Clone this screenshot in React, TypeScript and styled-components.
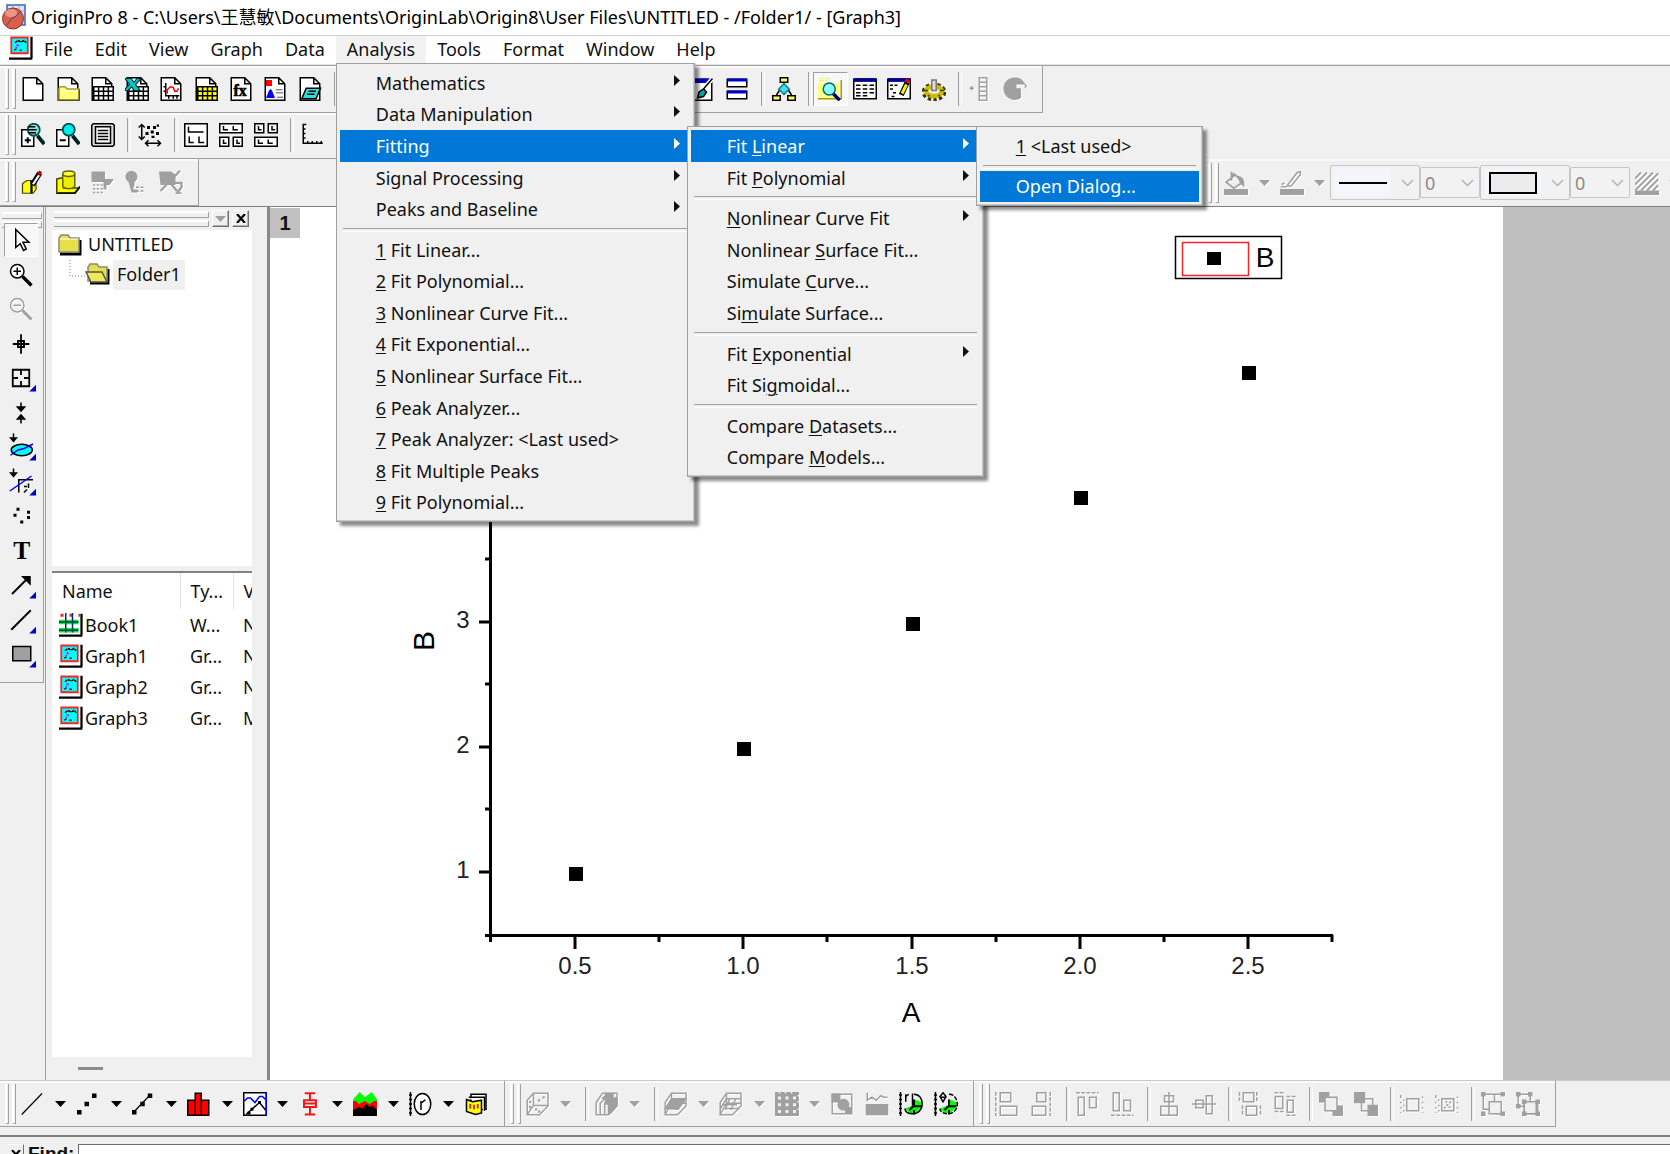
import React from "react";
import styled, { createGlobalStyle, css } from "styled-components";

const FACE = "#f0f0f0";
const EDGE = "#a0a0a0";
const HILITE = "#0078d7";
const UI = `"Noto Sans", "Noto Sans CJK SC", sans-serif`;
const CELL = 34.5;

const GlobalStyle = createGlobalStyle`
  * { box-sizing: border-box; }
  body { margin: 0; background: ${FACE}; font-family: ${UI}; font-size: 18px; color: #111; }
  button, input, select { font: inherit; color: inherit; }
  button { border: 0; padding: 0; margin: 0; background: none; }
  ul { list-style: none; margin: 0; padding: 0; }
`;

/* ---------- frame ---------- */

const Shell = styled.div`
  height: 100vh;
  overflow: hidden;
`;

const Frame = styled.div`
  display: flex;
  flex-direction: column;
  height: calc(100% + 14px);
  background: ${FACE};
`;

const TitleBar = styled.header`
  flex: none;
  display: flex;
  align-items: center;
  gap: 5px;
  height: 36px;
  padding: 0 2px 2px;
  border-bottom: 1px solid #d0d0d0;
  background: #fff;
`;

const Title = styled.h1`
  margin: 0;
  font-size: 18px;
  font-weight: 400;
  line-height: 32px;
  white-space: pre;
  color: #000;
`;

const MenuBar = styled.nav`
  position: relative;
  z-index: 5;
  flex: none;
  display: flex;
  height: 29px;
  padding-left: 9px;
  background: #fff;
  border-bottom: 1px solid #e4e4e4;
`;

const TopItem = styled.div`
  position: relative;
`;

const TopButton = styled.button<{ $open?: boolean }>`
  height: 27px;
  padding: 0 11px;
  line-height: 27px;
  background: ${(p) => (p.$open ? "#f2f2f2" : "transparent")};
`;

/* ---------- popup menus ---------- */

const Popup = styled.ul<{ $w: number; $h: number; $sub?: boolean }>`
  position: absolute;
  z-index: 1;
  top: ${(p) => (p.$sub ? "-4px" : "27px")};
  left: ${(p) => (p.$sub ? "calc(100% - 4px)" : "0")};
  display: flex;
  flex-direction: column;
  width: ${(p) => p.$w}px;
  height: ${(p) => p.$h}px;
  padding: 3px;
  border: 1px solid ${EDGE};
  background: ${FACE};
  box-shadow: inset -1px -1px 0 #c8c8c8, 4px 4px 3px rgba(0, 0, 0, 0.45);
`;

const Entry = styled.li`
  position: relative;
  flex: 1;
  min-height: 0;
`;

const EntryButton = styled.button<{ $on?: boolean }>`
  display: flex;
  align-items: center;
  justify-content: space-between;
  width: 100%;
  height: 100%;
  padding: 0 11px 0 36px;
  line-height: 24px;
  text-align: left;
  white-space: pre;
  background: ${(p) => (p.$on ? HILITE : "transparent")};
  color: ${(p) => (p.$on ? "#fff" : "#111")};

  svg { flex: none; margin-bottom: 5px; }
  u { text-underline-offset: 2px; text-decoration-thickness: 1px; }
`;

const Rule = styled.li`
  flex: none;
  height: 9px;
  margin: 0 3px;
  padding-top: 3px;

  &::before {
    content: "";
    display: block;
    height: 2px;
    border-top: 1px solid ${EDGE};
    border-bottom: 1px solid #fff;
  }
`;

/* ---------- toolbars ---------- */

const Dock = styled.div`
  flex: none;
  display: grid;
  grid-auto-rows: 1fr;
  height: 141px;
  border-top: 1px solid ${EDGE};
`;

const Band = styled.div`
  display: flex;
  overflow: hidden;
  min-width: 0;
`;

const BottomDock = styled(Band)`
  flex: none;
  height: 47px;
  border-top: 1px solid #c8c8c8;
`;

const Bar = styled.div<{ $wide?: boolean; $end?: boolean }>`
  flex: none;
  display: flex;
  align-items: center;
  padding-right: 10px;
  border-right: 1px solid ${EDGE};
  border-bottom: 1px solid ${EDGE};
  box-shadow: inset 0 2px 0 #fafafa;
  ${(p) => p.$wide && css`width: 600px;`}
  ${(p) =>
    p.$end &&
    css`
      width: 467px;
      margin-left: auto;
      padding-right: 0;
      overflow: hidden;
      border-right: 0;
      border-bottom: 0;
    `}
`;

const Grip = styled.div`
  flex: none;
  display: flex;
  gap: 3px;
  width: 16px;
  height: 40px;
  padding-left: 5px;

  &::before,
  &::after {
    content: "";
    width: 4px;
    border-left: 2px solid #fff;
    border-right: 1px solid ${EDGE};
    border-bottom: 1px solid ${EDGE};
  }
`;

const Cells = styled.div<{ $w: number }>`
  flex: none;
  display: grid;
  grid-auto-flow: column;
  grid-auto-columns: 1fr;
  width: ${(p) => p.$w}px;
`;

const Split = styled.div`
  flex: none;
  display: flex;
`;

const Tool = styled.button<{ $pressed?: boolean }>`
  flex: 1;
  display: flex;
  align-items: center;
  justify-content: center;
  height: 34px;
  min-width: 0;
  ${(p) =>
    p.$pressed &&
    css`
      border: 1px solid;
      border-color: ${EDGE} #fff #fff ${EDGE};
      background: #f8f8f8;
    `}
  &:disabled svg { filter: drop-shadow(1px 1px 0 #fff); }
`;

const Drop = styled.button`
  flex: none;
  display: flex;
  align-items: center;
  justify-content: center;
  width: 21px;
  height: 34px;
  &:disabled svg { filter: drop-shadow(1px 1px 0 #fff); }
`;

const Divider = styled.div<{ $roomy?: boolean }>`
  flex: none;
  width: ${(p) => (p.$roomy ? 14 : 12)}px;
  height: 34px;
  padding-left: ${(p) => (p.$roomy ? 9 : 7)}px;

  &::before {
    content: "";
    display: block;
    width: 2px;
    height: 100%;
    border-left: 1px solid ${EDGE};
    border-right: 1px solid #fff;
  }
`;

const Filler = styled.div`
  flex: none;
  width: 346px;
`;

const Combo = styled.div<{ $small?: boolean }>`
  position: relative;
  flex: none;
  display: flex;
  align-items: center;
  justify-content: space-between;
  width: ${(p) => (p.$small ? 60 : 90)}px;
  height: ${(p) => (p.$small ? 31 : 35)}px;
  padding: 0 5px 0 4px;
  border: 1px solid #c6c6c6;
  border-radius: 2px;
  background: #f2f2f2;
`;

const Sample = styled.button`
  display: flex;
  align-items: center;
  justify-content: center;
  width: 56px;
  height: 27px;
  background: #f3f7fd;
`;

const Amount = styled.select`
  width: 24px;
  height: 27px;
  padding: 0;
  border: 0;
  appearance: none;
  background: transparent;
  color: #8a8a8a !important;
  opacity: 1;
`;

/* ---------- body ---------- */

const Body = styled.main`
  flex: 1;
  display: flex;
  min-height: 0;
  border-top: 1px solid #808080;
`;

const Palette = styled.aside`
  flex: none;
  width: 46px;
  border-right: 1px solid ${EDGE};
`;

const PaletteBox = styled.div`
  width: 44px;
  height: 476px;
  border-right: 1px solid ${EDGE};
  border-bottom: 1px solid ${EDGE};
`;

const Bars = styled.div<{ $w: number }>`
  display: grid;
  gap: 2px;
  width: ${(p) => p.$w}px;

  &::before,
  &::after {
    content: "";
    height: 4px;
    border-top: 2px solid #fff;
    border-right: 1px solid ${EDGE};
    border-bottom: 1px solid ${EDGE};
  }
`;

const PaletteHead = styled.div`
  height: 16px;
  padding: 5px 2px 0;
`;

const PaletteCells = styled.div`
  display: grid;
  grid-auto-rows: 1fr;
  width: 34px;
  height: 449px;
  margin-left: 4px;
`;

const Explorer = styled.section`
  flex: none;
  display: flex;
  flex-direction: column;
  width: 224px;
  padding: 0 15px 0 6px;
  border-right: 3px solid #888;
`;

const ExplorerHead = styled.div`
  flex: none;
  display: flex;
  align-items: center;
  gap: 3px;
  height: 23px;
  padding-left: 2px;
`;

const MiniButton = styled.button`
  flex: none;
  display: flex;
  align-items: center;
  justify-content: center;
  width: 17px;
  height: 17px;
  border: 1px solid;
  border-color: #fff #707070 #707070 #fff;
  box-shadow: inset -1px -1px 0 #b0b0b0;
`;

const Tree = styled.ul`
  flex: none;
  height: 336px;
  background: #fff;
`;

const TreeRow = styled.li<{ $deep?: boolean }>`
  display: flex;
  align-items: center;
  height: 30px;
  padding-left: ${(p) => (p.$deep ? 17 : 6)}px;
  gap: ${(p) => (p.$deep ? 3 : 2)}px;
`;

const TreeLabel = styled.button<{ $selected?: boolean }>`
  height: 30px;
  padding: 0 4px 2px;
  line-height: 28px;
  background: ${(p) => (p.$selected ? "#f0f0f0" : "transparent")};
`;

const ListBox = styled.div`
  flex: 1;
  min-height: 0;
  margin-top: 5px;
  overflow: hidden;
  border-top: 2px solid #808080;
  background: #fff;
`;

const Listing = styled.table`
  table-layout: fixed;
  width: 231px;
  border-collapse: collapse;

  th, td { padding: 0 0 0 10px; text-align: left; font-weight: 400; white-space: nowrap; overflow: hidden; }
  th { height: 36px; border-right: 1px solid #e2e2e2; }
  td { height: 31px; line-height: 24px; }
  td:first-child { padding-left: 7px; }
`;

const FileName = styled.span`
  display: flex;
  align-items: center;
  gap: 2px;
`;

const ListFoot = styled.div`
  flex: none;
  display: flex;
  align-items: center;
  height: 23px;
  padding-left: 26px;
`;

const Thumb = styled.div`
  width: 25px;
  height: 3px;
  background: #8c8c8c;
`;

const Workspace = styled.section`
  flex: 1;
  display: flex;
  min-width: 0;
  overflow: hidden;
  background: #bfbfbf;
`;

const GraphPage = styled.div`
  position: relative;
  flex: 0 1 1233px;
  overflow: hidden;
  background: #fff;
`;

const LayerTab = styled.button`
  position: absolute;
  top: 1px;
  left: 0;
  width: 30px;
  height: 30px;
  background: #c0c0c0;
  font-family: "Liberation Sans", Arial, sans-serif;
  font-size: 20px;
  font-weight: 700;
`;

const Chart = styled.svg`
  display: block;
  font-family: "Liberation Sans", Arial, sans-serif;
`;

/* ---------- find bar ---------- */

const FindBar = styled.form`
  flex: none;
  display: flex;
  align-items: flex-start;
  height: 33px;
  margin-top: 8px;
  padding: 7px 0 0 8px;
  border-top: 2px solid #808080;
`;

const CloseFind = styled.button`
  display: flex;
  align-items: center;
  justify-content: center;
  width: 16px;
  height: 20px;
  border-right: 1px solid #707070;
  border-top: 1px solid #fff;
`;

const FindLabel = styled.label`
  padding: 0 4px;
  font-family: "Liberation Sans", Arial, sans-serif;
  font-size: 19px;
  font-weight: 700;
  line-height: 19px;
`;

const FindInput = styled.input`
  flex: 1;
  min-width: 0;
  height: 24px;
  border: 1px solid #707070;
  border-right: 0;
  border-radius: 0;
  background: #fff;
`;

/* ---------- icons, drawn on a 16 unit grid ---------- */

const Glyph = ({ children, size = 24 }: { children: React.ReactNode; size?: number }) => (
  <svg width={size} height={size} viewBox="0 0 16 16" fill="none" stroke="#000" aria-hidden="true">
    {children}
  </svg>
);

const Sheet = () => <path d="M1.5.5h9l4 4v11h-13zM10.5.5v4h4" fill="#fff" />;

const Grid = ({ fill }: { fill: string }) => (
  <g>
    <path d="M2.5 6.5h13v9h-13z" fill={fill} />
    <path d="M2.5 9.5h13M2.5 12.5h13M5.75 6.5v9M9 6.5v9M12.25 6.5v9" />
  </g>
);

const G = "#a0a0a0";

const DocOpen = () => (
  <><Sheet /><path d="M2 15.5V7.5l1-1h3l1.500 1.500h8v7.500z" fill="#ffff7a" stroke="#a89c30" /><path d="M3 9.500h12" stroke="#fff" strokeDasharray="1 1" /><path d="M15.500 8.500v7H2" stroke="#5a5420" /></>
);
const DocGrid = () => <><Sheet /><Grid fill="#fff" /></>;
const DocExcel = () => (
  <><Sheet /><Grid fill="#fff" /><path d="M0 1h4l2 2.500L8 1h2v1L7 5l3 4H6L4.500 6.500 2 9H0V8l3-3z" fill="#0cc" stroke="#033" strokeWidth=".8" /></>
);
const DocGraph = () => (
  <><Sheet /><path d="M4.500 4v8.500h9M3 6.500h1.500M3 9.500h1.500M6.500 13v1.500M9.500 13v1.500M12 13v1.500" /><path d="M5.500 11V8.500L7.500 6.500l2 .5 1 2.500h1.500l1-2" stroke="#f00" /></>
);
const DocMatrix = () => <><Sheet /><Grid fill="#ff0" /></>;
const DocFx = () => (
  <><Sheet /><text x="3" y="12.500" fontSize="10.500" fontWeight="700" fontFamily="Liberation Serif, serif" fill="#000" stroke="#000" strokeWidth=".4">fx</text></>
);
const DocLayout = () => (
  <><Sheet /><g stroke="none"><path d="M2 2h4v4H2z" fill="#f00" /><path d="M2 14l2-5 1-1 1 1 2 5z" fill="#00f" /></g><path d="M8.500 8.500h4.500M8.500 10.500h5M9.500 13.500h4" stroke="#889" /></>
);
const DocNotes = () => (
  <><Sheet /><path d="M5.500 7.500h9.500l-3 7H2.500z" fill="#3dd" /><path d="M7 9.500h5M6 11.500h5" /></>
);

const Brush = () => (
  <><path d="M1.500 1.500h13v14h-13z" fill="#fff" /><path d="M2 1h12v3H2z" fill="#00c" stroke="none" /><path d="M15.500.5 8 9" stroke="#fff" strokeWidth="3" /><path d="M15 1 9 8" /><path d="M5 14l1-4 3-2 2 2-2 3z" fill="#0aa" /></>
);
const TwoPanes = () => (
  <><path d="M1.500 1.500h13v5h-13zM1.500 9.500h13v5h-13z" fill="#fff" /><path d="M1.500 2h13M1.500 10h13" stroke="#00c" strokeWidth="2" /></>
);
const Flow = () => (
  <><path d="M8 4v8M8 8h-2.500L3 12M8 8h2.500l2.500 4" /><path d="M5.500.5h5v3h-5zM.5 12.500h5v3h-5zM10.500 12.500h5v3h-5z" fill="#ff6" /><path d="M8 4.500 11.500 8 8 11.500 4.500 8z" fill="#4de" stroke="#088" /></>
);
const Finder = () => (
  <><path d="M0 4h14v10H0z" fill="#ff8" stroke="none" /><path d="M0 14.500h15M15.500 2v13" stroke="#a90" /><path d="M1 1h8M1 2.500h6" stroke="#ee4" strokeDasharray="1 1" /><path d="M10 11l4.500 4.500" stroke="#006" strokeWidth="2.200" /><circle cx="7.500" cy="8" r="4" fill="#8ff" stroke="#067" /></>
);
const TableView = () => (
  <><path d="M.5 1.500h15v13H.5z" fill="#fff" /><path d="M.5 2h15" stroke="#008" strokeWidth="2.500" /><path d="M2 5.500h3M6.500 5.500h3M11 5.500h3M2 8h3M6.500 8h3M11 8h3M2 10.500h3M6.500 10.500h3M11 10.500h3M2 12.500h3M6.500 12.500h3" /></>
);
const EditView = () => (
  <><path d="M.5 1.500h15v13H.5z" fill="#fff" /><path d="M.5 2h15" stroke="#008" strokeWidth="2.500" /><path d="M2 5.500h5M2 8h3M4 10.500h3M3 13h2" strokeDasharray="2 1" /><path d="M13.500 3.500 9.500 12" strokeWidth="3.500" /><path d="M13 5 10 11" stroke="#fe0" strokeWidth="2" /><path d="M14 1.500l-.8 2" stroke="#e00" strokeWidth="3" /></>
);
const Gear = () => (
  <><ellipse cx="8" cy="10" rx="6.500" ry="4.500" stroke="#3a3500" strokeWidth="3.500" strokeDasharray="2 1.500" /><ellipse cx="8" cy="9.500" rx="5.200" ry="3.200" stroke="#cb0" strokeWidth="3" /><path d="M1 9h3M12 9h3M4 13l1-1M11 12l1 1" stroke="#4a4400" /><path d="M6.500 2h3v7h-3z" fill="#ddd" stroke="#777" /></>
);
const AddColumn = () => <path d="M1 7.500h3M2.500 6v3M7.500.5h5v15h-5zM7.500 3.500h5M7.500 6.500h5M7.500 9.500h5M7.500 12.500h5" stroke={G} />;
const Pie = () => <path d="M14 3.500A7.500 7.500 0 1 0 12 14V7.500H9V5h5.500v3L16 6z" fill={G} stroke="none" />;

const ZoomPage = ({ minus }: { minus?: boolean }) => (
  <>
    <path d="M.500 4.500h8v11h-8z" fill="#fff" />
    <path d={minus ? "M2.500 11.500h4" : "M2.500 11.500h4M4.500 9.500v4"} strokeWidth="1.300" />
    <path d="M11 8.500l4.500 5.500" stroke="#022" strokeWidth="2.500" />
    <circle cx="8.500" cy="4.500" r="4" fill={minus ? "#0ee" : "#9dd"} stroke="#055" strokeWidth="1.200" />
    {!minus && <path d="M4.500 2.500h5M4.500 4.500h6M5 6.500h5" />}
  </>
);
const PageList = () => (
  <><path d="M1.500.5h13l1 1v13l-1 1h-13l-1-1v-13z" fill="#ddd" /><path d="M3 2.500h10v11H3z" fill="#fff" /><path d="M4.500 5h7M4.500 7h7M4.500 9h7M4.500 11h7" /></>
);
const Rescale = () => (
  <><path d="M2.500 1v10M.5 3l2-2 2 2M.5 9l2 2 2-2M5 13.500h10M7 11.500l-2 2 2 2M13 11.500l2 2-2 2" /><path d="M6 2h2v2H6zM10 2h2v2h-2zM12.500 1h1.500v1.500h-1.500zM5 6h2v2H5zM8.500 5h2v2h-2zM12 6h2v2h-2zM9 8.500h2v1.500H9z" fill="#000" stroke="none" /></>
);
const LayA = () => <><path d="M.5.500h15v15H.500z" fill="#fff" /><path d="M3 2.500v3.500h10M3.500 9v4h3M10 9v4h3.500" /></>;
const LayB = () => <><path d="M.5.5h15v6H.500zM.5 9.500h6v6h-6zM9.500 9.500h6v6h-6z" fill="#fff" /><path d="M3 2v2.500h3M9.500 2v2.500h3M3 11v2.500h2M12 11v2.500h2" /></>;
const LayC = () => <><path d="M.5 9.500h15v6H.500zM.5.500h6v6h-6zM9.500.500h6v6h-6z" fill="#fff" /><path d="M3 11v2.500h3M9.500 11v2.500h3M3 2v2.500h2M12 2v2.500h2" /></>;
const Axis = () => <path d="M1.500.500v13h13M1.500 1h2M1.500 4h1.500M1.500 7h1.500M1.500 10h1.500M4.500 13v-1M7.500 13v-1M10.500 13v-1M13.500 13v-1" />;

const BoxPen = () => (
  <><path d="M1 9l3-2h6v6l-2 2.500H1z" fill="#ff0" stroke="#440" strokeWidth=".8" /><path d="M7 7v8.500" stroke="#000" strokeWidth="1.500" /><path d="M12.500 2 7.500 10" strokeWidth="3.500" /><path d="M12 3.500 8 9.500" stroke="#fff" strokeWidth="1.500" /><path d="M11.500 1.500l2 1" stroke="#c00" strokeWidth="2.500" /></>
);
const BoxOpen = () => (
  <><path d="M.500 6l4.500-1v7h10.500l-3 3.500H.500z" fill="#ff0" stroke="#440" /><path d="M4.500 3v8c2 2 6 2 8 0V3z" fill="#ee0" stroke="#660" /><ellipse cx="8.500" cy="2.500" rx="4" ry="1.800" fill="#ff3" stroke="#660" /><path d="M1 15.500h11.500l3.500-4.500" stroke="#110" strokeWidth="1.300" /></>
);
const GreyTable = () => <><path d="M1 1h9v5h6l-3 4h-2v3H9V8H1z" fill={G} stroke="none" /><path d="M2 10h7M2 12.500h7M2 15h7" stroke={G} strokeDasharray="1.500 1" /></>;
const GreyBalloon = () => <><circle cx="5" cy="4.500" r="4" fill={G} stroke="none" /><path d="M3 8h4v2l-1 3h3v2H5z" fill={G} stroke="none" /><path d="M8 11.500h6M8 14h5" stroke={G} strokeDasharray="2 1" /></>;
const GreyCross = () => <><path d="M0 1h8l3 2v7H1z" fill={G} stroke="none" /><path d="M14 .500 1 14M7 8l5 6M10 8.500h5v3l-3 4h3" stroke={G} strokeWidth="1.500" /></>;

const Bucket = () => <><path d="M5 .500v6M1.500 7.500l6-5 5 5-6 4zM5 3l2-1.500" stroke={G} strokeWidth="1.200" /><path d="M9 3c4 1 5 3 4.500 8l-3-3z" fill={G} stroke="none" /><path d="M0 12h16v4H0z" fill={G} stroke="none" /></>;
const Pen = () => <><path d="M5 9.500 11.500 1l2-.5v2L7.500 10H5zM.500 10.500h4M1 9l2-1" stroke={G} /><path d="M0 12h16v4H0z" fill={G} stroke="none" /></>;
const Hatch = () => <><path d="M0 5l4-4M0 9l8-8M0 13 12 1M4 13 15.500 1.500M8 13l7.500-7.500M12 13l3.500-3.500" stroke={G} strokeWidth="1.200" /><path d="M0 13h16v3H0z" fill={G} stroke="none" /></>;

const Corner = () => <path d="M18 12.500V17h-4.500z" fill="#00c" stroke="none" />;

const PaletteSvg = styled.svg`
  overflow: visible;
`;
const PGlyph = ({ children }: { children: React.ReactNode }) => (
  <PaletteSvg width="24" height="24" viewBox="0 0 16 16" fill="none" stroke="#000" aria-hidden="true">
    {children}
  </PaletteSvg>
);

const palette: [string, React.ReactNode, boolean?][] = [
  ["Pointer", <path d="M4.500 1v12l3-2.500 2.200 4.500 1.800-1-2.200-4.500h4z" fill="#fff" />],
  ["Zoom in", <><circle cx="5.500" cy="5.500" r="4.500" fill="#fff" /><path d="M3 5.500h5M5.500 3v5" /><path d="M9 9l6 6" strokeWidth="2.200" /></>],
  ["Zoom out", <><circle cx="5.500" cy="5.500" r="4.500" stroke={G} /><path d="M3 5.500h5" stroke={G} /><path d="M9 9l6 6" stroke={G} strokeWidth="2" /></>, true],
  ["Screen reader", <><path d="M8 1.500v13M2.500 8h11" strokeWidth="1.200" /><path d="M6 6h4v4H6z" strokeWidth="1.200" /></>],
  ["Data reader", <><path d="M2.500 2.500h11v11h-11zM8 2.500v3.500M8 10v3.500M2.500 8H6M10 8h3.500" strokeWidth="1.200" /><Corner /></>],
  ["Data selector", <><path d="M8 1v4M8 11v4" /><path d="M4.500 3.500h7L8 7.500zM4.500 12.500h7L8 8.500z" fill="#000" stroke="none" /></>],
  ["Selection on active plot", <><path d="M3-1v3" /><path d="M0 1.500h6L3 5z" fill="#000" stroke="none" /><ellipse cx="8.500" cy="10" rx="7" ry="3.800" fill="#0ff" /><path d="M1 13.500 6 10l4-1 6-3" stroke="#00f" /><Corner /></>],
  ["Mask points", <><path d="M3-1v3" /><path d="M0 1.500h6L3 5z" fill="#000" stroke="none" /><path d="M6.500 15V6.500H16" /><path d="M10 11h2M10 15l2-2M13 9v3" strokeDasharray="3 1" /><path d="M.500 14 15 4" stroke="#00f" /><Corner /></>],
  ["Draw data", <path d="M5 2.500h2v2H5zM3 6.500h2v2H3zM7.500 11h2v2h-2zM12 4.500h2v2h-2zM12 8h2v2h-2z" fill="#000" stroke="none" />],
  ["Text", <text x="8.500" y="13.500" textAnchor="middle" fontSize="17" fontWeight="700" fontFamily="Liberation Serif, serif" fill="#000" stroke="none">T</text>],
  ["Arrow", <><path d="M2 14 12 4" strokeWidth="1.300" /><path d="M8 2h6.500v6.500z" fill="#000" stroke="none" /><Corner /></>],
  ["Line", <><path d="M1.500 14.500 14.500 1.500" strokeWidth="1.300" /><Corner /></>],
  ["Rectangle", <><path d="M2.500 3h12v9.500h-12z" fill="#a0a0a0" /><Corner /></>],
];

const PLine = () => <path d="M.500 15 14 1" strokeWidth=".8" />;
const PScatter = () => <path d="M0 12h3v3H0zM5 6.500h3v3H5zM10 1h3v3h-3z" fill="#000" stroke="none" />;
const PLineSym = () => <><path d="M1.500 13 12 2" strokeWidth=".8" /><path d="M0 12h3v3H0zM5.500 6.500h3v3h-3zM10.500 1h3v3h-3z" fill="#000" stroke="none" /></>;
const PColumn = () => <path d="M.500 5.500h5v10h-5zM5.500.800h4v14.700h-4zM9.500 5.500h5v10h-5z" fill="#f00" />;
const PMulti = () => (
  <><path d="M.500.500h15v15H.500z" fill="#fff" /><path d="M15.500 0v16" stroke="#00f" /><path d="M1 6l2-2 2 0 3 3 3-4h2l2 2" stroke="#00f" /><path d="M2 15l9-8 4 5" /><path d="M10 6h2v2h-2zM5 10.500h2v2H5zM3 13h2v2H3z" fill="#000" stroke="none" /></>
);
const PBox = () => <path d="M4.500.800h7M8 1v4M4 5.500h8v4.500H4zM4 7.700h8M8 10v5M4.500 15h7" stroke="#f01818" strokeWidth="1.300" />;
const PArea = () => (
  <g stroke="none"><path d="M0 5l4.500-5 3.500 3.500L12.500 0 16 5v5H0z" fill="#0f0" /><path d="M0 6h2l2 2 4-2 3 2 3-2h2v10H0z" fill="#f00" /><path d="M0 12l4-2 2 1 3-3 2 2 2-1 3 3v4H0z" fill="#000" /></g>
);
const PPolar = () => (
  <><path d="M1 0v16M0 2h2M0 5h2M0 8h2M0 11h2M0 14h2" /><ellipse cx="9" cy="8" rx="5.500" ry="7" fill="#fff" /><path d="M8 12V6M8 7.500 10.500 5.500h.5" /></>
);
const PTemplate = () => (
  <><path d="M4 1.500h10v10H4z" fill="#fff" /><path d="M2.500 3.500h10.500v9" fill="#fff" /><path d="M1 5l4 1.500 6-1V14l-4 1-6-2z" fill="#ff0" /><path d="M3.500 8v3M6 8.500v3M8.500 8v3" stroke="#c20" strokeWidth="1.200" /></>
);

const Cube = ({ children }: { children?: React.ReactNode }) => (
  <g stroke={G}><path d="M.800 7 5 .800h9.700v8.500L9 15.200H.800zM5 .800v6.500M.800 15 5 7.500h9.500" />{children}</g>
);
const CDots = () => (
  <g stroke={G}><path d="M.800 5.500 5 .800h9.700v8.500L9 15.200H.800zM5 .800v8M.800 15 5 9h9.500" /><path d="M2 6.500h1.500M2 10h1.500M8 5.500h1.500M11 3.500h1.500M6 11.500h1.500M8 13h1.500" strokeWidth="1.500" /></g>
);
const CBars = () => (
  <><path d="M.800 7 5 .800h9.700v8.500L9 15.200H.800zM3.500 15V7.500L6 5M6.500 15V7" stroke={G} /><path d="M5 4l2-1.500V1h5v3h2.500v5l-4 5H9V8H7V5z" fill={G} stroke={G} /></>
);
const CSurface = () => <Cube><path d="M1 11 5 4.500h9.500l-5 7z" fill={G} /></Cube>;
const CWire = () => <Cube><path d="M1 11 5 4.500h9.500M2 8.500h10M7 5l-3 7M11 5l-3 7M4 11h9" /></Cube>;
const CMesh = () => (
  <><path d="M0 0h16v16H0z" fill={G} stroke="none" /><path d="M2 4h2M7 4h2M12 4h2M2 8.500h2M7 8.500h2M12 8.500h2M2 13h2M7 13h2M12 13h2" stroke="#f0f0f0" strokeWidth="2" /><path d="M3 0v1M7 0v1M11 0v1M15.500 2v1M15.500 6v1M15.500 11v1" stroke="#f0f0f0" /></>
);
const CImage = () => <><path d="M1.500 1.500h13v13h-13z" stroke={G} /><path d="M1 1h6v6H1z" fill={G} stroke="none" /><circle cx="9" cy="8.500" r="4" fill={G} stroke="none" /><path d="M10 10h4v4h-4z" fill={G} stroke="none" /></>;
const CProfile = () => <><path d="M1 8.500h14V15H1z" fill={G} stroke={G} /><path d="M1.500.500v5l3-2 3 2 3-3 2 1h2.500" stroke={G} /></>;
const CPolar = ({ theta }: { theta?: boolean }) => (
  <>
    <path d="M1 0v16M0 2h2M0 5h2M0 8h2M0 11h2M0 14h2" />
    <path d="M4 11l5-2 2-4 4 2-1 4-3 3H7z" fill="#0f0" stroke="none" />
    <path d="M10 1.500c3.500 0 5.500 3 5.500 6.500S13 14.500 9.500 14.500 4 13 4 11" strokeDasharray={theta ? "3 1" : undefined} />
    <path d="M9.500 9.500 7 12M10 5v4.500h5M10 12v3" strokeWidth="1.300" />
    {theta ? <path d="M6 .500 8 3 6 6.500 4 3zM4 3.500h4" /> : <path d="M4.500 1.500v5M4.500 3l2-1.500M9 1v8" />}
  </>
);

const align = [
  ["M.500 0v16", "M3.500.500h7v6h-7zM3.500 9.500h11v6h-11z"],
  ["M13.500 0v16", "M4.500.500h6v6h-6zM1.500 9.500h9v6h-9z"],
  ["M0 .500h15", "M1.500 3.500h4v12h-4zM9 3.500h4.500v7H9z"],
  ["M0 15.500h15", "M1.500.500h4v12h-4zM8.500 5.500H13v7H8.500z"],
  ["M0 0", "M5 2.500h6v4H5zM2.500 9.500h11v6h-11zM8 0v16"],
  ["M0 0", "M2.500 5.500h5v5h-5zM9.500 2.500h4v12h-4zM0 8h16"],
  ["M1 0v7M12.500 0v7M3 9v7M15 9v7", "M3.500.500h7v6h-7zM5.500 9.500h7v6h-7z"],
  ["M1 .500h6M1 13h6M9 3h6M9 15.500h6", "M1.500 3h5v8h-5zM9.500 5.500h4v8h-4z"],
];
const Align = ({ i }: { i: number }) => <g stroke={G}><path d={align[i][0]} strokeDasharray="2.500 1" /><path d={align[i][1]} /></g>;
const Front = () => <g stroke={G}><path d="M.500.500h6v6h-6zM9.500 9.500h6v6h-6z" fill={G} /><path d="M4 3.500h8v9H4z" fill="#f0f0f0" /></g>;
const Back = () => <g stroke={G}><path d="M5 4.500h7.500v8H5z" /><path d="M.500.500h6.500V7H.500zM9.500 9H16v6.500H9.500z" fill={G} /></g>;
const Area = ({ dots }: { dots?: boolean }) => (
  <g stroke={G}><path d="M4.500 4.500h8v8h-8z" /><path d="M.500 3v11M2.500 5v8M15 3v11M0 2.500h1" strokeDasharray="1 2.500" />{dots && <path d="M6 11l5-5M7 6l1 1M9 10h2" strokeDasharray="1.500 1" />}</g>
);
const GroupObj = ({ un }: { un?: boolean }) => (
  <g stroke={G}><path d={un ? "M1.500 1.500h8v8h-8zM5.500 6.500h9v8h-9z" : "M1.500 1.500H14M1.500 1.500v10h4M9 2v4M9 14.500h5"} /><path d="M5.500 6.500h8v8h-8z" fill="#f0f0f0" /><path d={un ? "M0 0h3v3H0zM8 0h3v3H8zM0 8h3v3H0zM13 5h3v3h-3zM4 5h3v3H4zM4 13h3v3H4zM13 13h3v3h-3z" : "M0 0h3v3H0zM13 0h3v3h-3zM0 13h3v3H0zM13 13h3v3h-3z"} fill={G} stroke="none" /></g>
);

const MiniGraph = ({ size = 24 }: { size?: number }) => (
  <Glyph size={size}>
    <path d="M0 15h15.500M15 .500V15" strokeWidth="1.500" />
    <path d="M1.500 1h11v10.500h-11z" fill="#0ff" stroke="#f22" strokeWidth="1.200" />
    <path d="M4 4.500l2-1.500 2 1 2-1 1.500 1.500M3.500 9.500l1.500-1M7 9.500h1.500" strokeDasharray="2 .5" />
    <path d="M4.500 8l2-2M5 6h1" stroke="#c0f" strokeDasharray="1 1" />
  </Glyph>
);
const MiniBook = () => (
  <Glyph>
    <path d="M0 15h15.500M15 .500V15" strokeWidth="1.500" />
    <path d="M1 1.500h13" stroke="#f22" strokeWidth="2" strokeDasharray="2 4" />
    <path d="M0 6h13M0 11.500h13" stroke="#0e2" strokeWidth="3" />
    <path d="M4.500 0v13M9 0v13M0 6h13M0 11.500h13" stroke="#00307a" />
  </Glyph>
);
const FolderClosed = () => (
  <svg width="24" height="22" viewBox="0 0 24 22" aria-hidden="true">
    <path d="M2 20h20V6" fill="none" stroke="#000" strokeWidth="3" />
    <path d="M1 18V4l2-3h7l2 3h9v14z" fill="#e6e04a" stroke="#8a8a70" strokeWidth="1.500" />
    <path d="M2 5h18" stroke="#fff" />
  </svg>
);
const FolderOpen = () => (
  <svg width="41" height="30" viewBox="0 0 41 30" aria-hidden="true">
    <path d="M1 0v16h16" fill="none" stroke="#808080" strokeDasharray="1 2" />
    <path d="M21 23h18V9" fill="none" stroke="#000" strokeWidth="3" />
    <path d="M19 21V7l2-3h7l2 3h8v14z" fill="#e6e04a" stroke="#8a8a70" strokeWidth="1.500" />
    <path d="M17 12h16l5 10H22z" fill="#efe95a" stroke="#555" strokeWidth="1.500" />
  </svg>
);
const AppIcon = () => (
  <svg width="24" height="26" viewBox="0 0 24 26" aria-hidden="true">
    <path d="M5 1h18v20H5z" fill="#dbe6fa" stroke="#3a62b5" strokeWidth="1.500" />
    <path d="M11 1v6M17 1v20M5 7h18" stroke="#86a4dd" />
    <circle cx="11" cy="14.500" r="10.500" fill="#d8604a" stroke="#8a2c20" />
    <ellipse cx="9" cy="9" rx="6" ry="4" fill="#f0a593" opacity=".8" />
    <path d="M5 21l5-7 3-1 5-5" fill="none" stroke="#5a3a80" />
  </svg>
);

const Down = ({ off }: { off?: boolean }) => (
  <svg width="11" height="6" viewBox="0 0 11 6" aria-hidden="true"><path d="M0 0h11L5.500 6z" fill={off ? G : "#000"} /></svg>
);
const Chevron = () => (
  <svg width="13" height="8" viewBox="0 0 13 8" aria-hidden="true"><path d="M1 1l5.500 5.500L12 1" fill="none" stroke="#b4b4b4" strokeWidth="1.500" /></svg>
);
const Right = () => (
  <svg width="6" height="11" viewBox="0 0 6 11" aria-hidden="true"><path d="M0 0v11l6-5.500z" fill="currentColor" /></svg>
);
const Cross = () => (
  <svg width="10" height="9" viewBox="0 0 10 9" aria-hidden="true"><path d="M1 0l8 9M9 0 1 9" stroke="#000" strokeWidth="2.200" /></svg>
);

/* ---------- toolbar pieces ---------- */

type Item = [string, React.ReactNode];

const Tools = ({ items, off, pressed }: { items: Item[]; off?: boolean; pressed?: string }) => (
  <Cells $w={Math.round(items.length * CELL)}>
    {items.map(([name, art]) => (
      <Tool key={name} type="button" aria-label={name} disabled={off} $pressed={pressed === name}>
        <Glyph>{art}</Glyph>
      </Tool>
    ))}
  </Cells>
);

const SplitTools = ({ items, off }: { items: Item[]; off?: boolean }) => (
  <Cells $w={Math.round(items.length * 55.4)}>
    {items.map(([name, art]) => (
      <Split key={name}>
        <Tool type="button" aria-label={name} disabled={off}><Glyph>{art}</Glyph></Tool>
        <Drop type="button" aria-label={`${name} options`} disabled={off}><Down off={off} /></Drop>
      </Split>
    ))}
  </Cells>
);

/* ---------- menus ---------- */

type Node = { label: string; arrow?: boolean; on?: boolean; menu?: React.ReactNode } | "-";

const Mnemonic = ({ text }: { text: string }) => {
  const at = text.indexOf("&");
  if (at < 0) return <span>{text}</span>;
  return <span>{text.slice(0, at)}<u>{text[at + 1]}</u>{text.slice(at + 2)}</span>;
};

const Menu = ({ nodes, w, h, sub }: { nodes: Node[]; w: number; h: number; sub?: boolean }) => (
  <Popup role="menu" $w={w} $h={h} $sub={sub}>
    {nodes.map((n, i) =>
      n === "-" ? (
        <Rule key={i} role="separator" />
      ) : (
        <Entry key={i} role="none">
          <EntryButton type="button" role="menuitem" $on={n.on}>
            <Mnemonic text={n.label} />
            {n.arrow && <Right />}
          </EntryButton>
          {n.menu}
        </Entry>
      )
    )}
  </Popup>
);

const linearMenu: Node[] = [{ label: "&1 <Last used>" }, "-", { label: "Open Dialog...", on: true }];

const fittingMenu: Node[] = [
  { label: "Fit &Linear", arrow: true, on: true, menu: <Menu sub nodes={linearMenu} w={227} h={80} /> },
  { label: "Fit &Polynomial", arrow: true },
  "-",
  { label: "&Nonlinear Curve Fit", arrow: true },
  { label: "Nonlinear &Surface Fit..." },
  { label: "Simulate &Curve..." },
  { label: "Si&mulate Surface..." },
  "-",
  { label: "Fit &Exponential", arrow: true },
  { label: "Fit Si&gmoidal..." },
  "-",
  { label: "Compare &Datasets..." },
  { label: "Compare &Models..." },
];

const analysisMenu: Node[] = [
  { label: "Mathematics", arrow: true },
  { label: "Data Manipulation", arrow: true },
  { label: "Fitting", arrow: true, on: true, menu: <Menu sub nodes={fittingMenu} w={297} h={351} /> },
  { label: "Signal Processing", arrow: true },
  { label: "Peaks and Baseline", arrow: true },
  "-",
  { label: "&1 Fit Linear..." },
  { label: "&2 Fit Polynomial..." },
  { label: "&3 Nonlinear Curve Fit..." },
  { label: "&4 Fit Exponential..." },
  { label: "&5 Nonlinear Surface Fit..." },
  { label: "&6 Peak Analyzer..." },
  { label: "&7 Peak Analyzer: <Last used>" },
  { label: "&8 Fit Multiple Peaks" },
  { label: "&9 Fit Polynomial..." },
];

const topMenus = ["File", "Edit", "View", "Graph", "Data", "Analysis", "Tools", "Format", "Window", "Help"];

/* ---------- chart ---------- */

const points = [[0.5, 1], [1, 2], [1.5, 3], [2, 4], [2.5, 5]];
const px = (v: number) => Math.round(305 + (v - 0.5) * 336.5);
const py = (v: number) => Math.round(665 - (v - 1) * 125.2);

const ScatterPlot = () => (
  <Chart width="1233" height="873" viewBox="0 0 1233 873" role="img" aria-label="B against A">
    <g stroke="#000" strokeWidth="3">
      <path d={`M220.500 150V${py(0.5) + 7}M215 ${py(0.5)}.500H1063`} />
      {[0.5, 1, 1.5, 2, 2.5].map((v) => (
        <path key={v} d={`M${px(v)} ${py(0.5)}v14M${px(v + 0.25)} ${py(0.5)}v7`} />
      ))}
      {[1, 2, 3, 4].map((v) => (
        <path key={v} d={`M209 ${py(v)}h11M215 ${py(v + 0.5)}h5`} />
      ))}
    </g>
    <g fontSize="24" fill="#222" textAnchor="middle">
      {[0.5, 1, 1.5, 2, 2.5].map((v) => <text key={v} x={px(v)} y="767">{v.toFixed(1)}</text>)}
      {[1, 2, 3].map((v) => <text key={v} x="193" y={py(v) + 6}>{v}</text>)}
    </g>
    <g fontSize="28" fill="#000" textAnchor="middle">
      <text x="641" y="815">A</text>
      <text transform="translate(164 434) rotate(-90)" fontSize="30">B</text>
    </g>
    {points.map(([a, b]) => <rect key={a} x={px(a) - 6} y={py(b) - 5} width="14" height="14" />)}
    <path d="M905.500 29.500h106v42h-106z" fill="#fff" stroke="#000" strokeWidth="1.500" />
    <path d="M912.500 35.500h66v33h-66z" fill="none" stroke="#f22" strokeWidth="1.500" />
    <rect x="937" y="45" width="14" height="13" />
    <text x="995" y="60" fontSize="28" textAnchor="middle">B</text>
  </Chart>
);

const files = [
  ["Book1", "W...", "N"],
  ["Graph1", "Gr...", "N"],
  ["Graph2", "Gr...", "N"],
  ["Graph3", "Gr...", "M"],
];

export default function App() {
  return (
    <Shell>
      <GlobalStyle />
      <Frame>
        <TitleBar>
          <AppIcon />
          <Title>{"OriginPro 8 - C:\\Users\\王慧敏\\Documents\\OriginLab\\Origin8\\User Files\\UNTITLED - /Folder1/ - [Graph3]"}</Title>
        </TitleBar>

        <MenuBar>
          <MiniGraph />
          {topMenus.map((name) => (
            <TopItem key={name}>
              <TopButton type="button" $open={name === "Analysis"}>{name}</TopButton>
              {name === "Analysis" && <Menu nodes={analysisMenu} w={359} h={459} />}
            </TopItem>
          ))}
        </MenuBar>

        <Dock>
          <Band>
            <Bar>
              <Grip />
              <Tools items={[["New project", <Sheet />], ["New folder", <DocOpen />], ["New worksheet", <DocGrid />], ["New Excel", <DocExcel />], ["New graph", <DocGraph />], ["New matrix", <DocMatrix />], ["New function", <DocFx />], ["New layout", <DocLayout />], ["New notes", <DocNotes />]]} />
              <Divider />
              <Filler />
              <Tools items={[["Custom routine", <Brush />], ["Duplicate", <TwoPanes />]]} />
              <Divider />
              <Tools items={[["Flow", <Flow />]]} />
              <Divider />
              <Tools pressed="Project explorer" items={[["Project explorer", <Finder />], ["Results log", <TableView />], ["Command window", <EditView />], ["Code builder", <Gear />]]} />
              <Divider />
              <Tools off items={[["Add column", <AddColumn />], ["Recalculate", <Pie />]]} />
            </Bar>
          </Band>
          <Band>
            <Bar $wide>
              <Grip />
              <Tools items={[["Zoom in page", <ZoomPage />], ["Zoom out page", <ZoomPage minus />], ["Whole page", <PageList />]]} />
              <Divider />
              <Tools items={[["Rescale", <Rescale />]]} />
              <Divider />
              <Tools items={[["Layers", <LayA />], ["Extract layers", <LayB />], ["Extract graphs", <LayC />]]} />
              <Divider />
              <Tools items={[["Add layer", <Axis />]]} />
            </Bar>
          </Band>
          <Band>
            <Bar>
              <Grip />
              <Cells $w={172}>
                <Tool type="button" aria-label="Edit box"><Glyph><BoxPen /></Glyph></Tool>
                <Tool type="button" aria-label="Open box"><Glyph><BoxOpen /></Glyph></Tool>
                <Tool type="button" aria-label="Mask range" disabled><Glyph><GreyTable /></Glyph></Tool>
                <Tool type="button" aria-label="Mask color" disabled><Glyph><GreyBalloon /></Glyph></Tool>
                <Tool type="button" aria-label="Swap mask" disabled><Glyph><GreyCross /></Glyph></Tool>
              </Cells>
            </Bar>
            <Bar $end>
              <Grip />
              <SplitTools off items={[["Fill color", <Bucket />], ["Line color", <Pen />]]} />
              <Combo>
                <Sample type="button" aria-label="Line style" disabled>
                  <svg width="48" height="2" viewBox="0 0 48 2"><path d="M0 1h48" stroke="#000" strokeWidth="2" /></svg>
                </Sample>
                <Chevron />
              </Combo>
              <Combo $small>
                <Amount aria-label="Line width" disabled defaultValue="0"><option>0</option></Amount>
                <Chevron />
              </Combo>
              <Combo>
                <Sample type="button" aria-label="Border style" disabled>
                  <svg width="48" height="22" viewBox="0 0 48 22"><path d="M1 1h46v20H1z" fill="#ececec" stroke="#000" strokeWidth="2" /></svg>
                </Sample>
                <Chevron />
              </Combo>
              <Combo $small>
                <Amount aria-label="Border width" disabled defaultValue="0"><option>0</option></Amount>
                <Chevron />
              </Combo>
              <SplitTools off items={[["Pattern", <Hatch />]]} />
            </Bar>
          </Band>
        </Dock>

        <Body>
          <Palette>
            <PaletteBox>
              <PaletteHead><Bars $w={40} /></PaletteHead>
              <PaletteCells>
                {palette.map(([name, art, off], i) => (
                  <Tool key={name} type="button" aria-label={name} disabled={off} $pressed={i === 0}>
                    <PGlyph>{art}</PGlyph>
                  </Tool>
                ))}
              </PaletteCells>
            </PaletteBox>
          </Palette>

          <Explorer>
            <ExplorerHead>
              <Bars $w={155} />
              <MiniButton type="button" aria-label="Panel options"><Down off /></MiniButton>
              <MiniButton type="button" aria-label="Close panel"><Cross /></MiniButton>
            </ExplorerHead>
            <Tree>
              <TreeRow><FolderClosed /><TreeLabel type="button">UNTITLED</TreeLabel></TreeRow>
              <TreeRow $deep><FolderOpen /><TreeLabel type="button" $selected>Folder1</TreeLabel></TreeRow>
            </Tree>
            <ListBox>
              <Listing>
                <colgroup><col width="128" /><col width="53" /><col width="50" /></colgroup>
                <thead><tr><th>Name</th><th>Ty...</th><th>V</th></tr></thead>
                <tbody>
                  {files.map(([name, type, view], i) => (
                    <tr key={name}>
                      <td><FileName>{i === 0 ? <MiniBook /> : <MiniGraph />}{name}</FileName></td>
                      <td>{type}</td>
                      <td>{view}</td>
                    </tr>
                  ))}
                </tbody>
              </Listing>
            </ListBox>
            <ListFoot><Thumb /></ListFoot>
          </Explorer>

          <Workspace>
            <GraphPage>
              <ScatterPlot />
              <LayerTab type="button">1</LayerTab>
            </GraphPage>
          </Workspace>
        </Body>

        <BottomDock>
          <Bar>
            <Grip />
            <SplitTools items={[["Line plot", <PLine />], ["Scatter plot", <PScatter />], ["Line and symbol", <PLineSym />], ["Column", <PColumn />], ["Multi panel", <PMulti />], ["Box chart", <PBox />], ["Area", <PArea />], ["Polar", <PPolar />]]} />
            <Tools items={[["Template library", <PTemplate />]]} />
          </Bar>
          <Bar>
            <Grip />
            <SplitTools off items={[["3D scatter", <CDots />]]} />
            <Divider $roomy />
            <SplitTools off items={[["3D bars", <CBars />]]} />
            <Divider $roomy />
            <SplitTools off items={[["3D surface", <CSurface />], ["3D wireframe", <CWire />], ["Contour", <CMesh />]]} />
            <Tools off items={[["Image plot", <CImage />], ["Profile", <CProfile />]]} />
            <Tools items={[["Polar r", <CPolar />], ["Polar theta", <CPolar theta />]]} />
          </Bar>
          <Bar>
            <Grip />
            <Tools off items={[["Left", <Align i={0} />], ["Right", <Align i={1} />]]} />
            <Divider />
            <Tools off items={[["Top", <Align i={2} />], ["Bottom", <Align i={3} />]]} />
            <Divider />
            <Tools off items={[["Vertical", <Align i={4} />], ["Horizontal", <Align i={5} />]]} />
            <Divider />
            <Tools off items={[["Uniform width", <Align i={6} />], ["Uniform height", <Align i={7} />]]} />
            <Divider />
            <Tools off items={[["Front", <Front />], ["Back", <Back />]]} />
            <Divider />
            <Tools off items={[["Front data", <Area />], ["Back data", <Area dots />]]} />
            <Divider />
            <Tools off items={[["Group", <GroupObj />], ["Ungroup", <GroupObj un />]]} />
          </Bar>
        </BottomDock>

        <FindBar>
          <CloseFind type="button" aria-label="Close find"><Cross /></CloseFind>
          <FindLabel htmlFor="find">Find:</FindLabel>
          <FindInput id="find" type="text" />
        </FindBar>
      </Frame>
    </Shell>
  );
}
